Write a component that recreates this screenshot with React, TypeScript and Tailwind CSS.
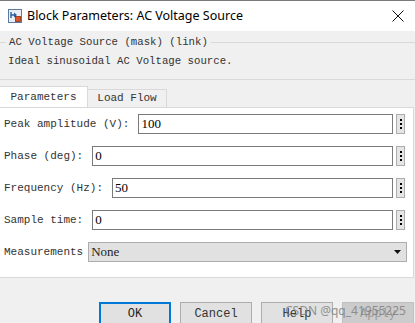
import React from 'react';

const mono = { fontFamily: '"Liberation Mono", "DejaVu Sans Mono", monospace' };
const serif = { fontFamily: '"Liberation Serif", "Times New Roman", serif' };

function BlockIcon() {
  return (
    <svg width="14" height="14" viewBox="0 0 14 14">
      <rect x="0.5" y="0.5" width="13" height="13" fill="#e9eef5" stroke="#5b7aa6" />
      <path d="M3 3 L3 9 M3 6 L8 6" stroke="#2f5d9e" strokeWidth="1.4" fill="none" />
      <path d="M6 3.5 L9 6 L6 8.5 Z" fill="#2f5d9e" />
      <rect x="7.5" y="7.5" width="5" height="5" fill="#d9542b" stroke="#8c2c10" strokeWidth="0.8" />
    </svg>
  );
}

function Dots() {
  return (
    <div className="w-[9px] h-[20px] bg-[#e5e5e5] border border-[#adadad] flex flex-col items-center justify-center gap-[2px]">
      <div className="w-[2px] h-[2px] bg-black" />
      <div className="w-[2px] h-[2px] bg-black" />
      <div className="w-[2px] h-[2px] bg-black" />
    </div>
  );
}

function Field({ label, value }: { label: string; value: string }) {
  return (
    <div className="flex items-center h-[20px]">
      <span className="text-[11px] text-[#333] whitespace-pre pl-[4px] pr-[9px]" style={mono}>{label}</span>
      <div className="flex-1 h-[20px] border border-[#7a7a7a] bg-white flex items-center pl-[2px] text-[13px] text-black" style={serif}>
        {value}
      </div>
      <div className="ml-[3px] mr-[8px]">
        <Dots />
      </div>
    </div>
  );
}

function Button({ label, primary, disabled }: { label: string; primary?: boolean; disabled?: boolean }) {
  return (
    <div
      className={`w-[72px] h-[24px] flex items-center justify-center text-[12px] ${
        primary
          ? 'border-2 border-[#0078d7] bg-[#e1e1e1] text-[#222]'
          : disabled
          ? 'border border-[#bfbfbf] bg-[#cccccc] text-[#9a9a9a]'
          : 'border border-[#adadad] bg-[#e1e1e1] text-[#333]'
      }`}
      style={mono}
    >
      {label}
    </div>
  );
}

export default function App() {
  return (
    <div className="w-[415px] h-[323px] overflow-hidden bg-[#f0f0f0] relative">
      {/* title bar */}
      <div className="h-[31px] bg-white border-t border-[#7a7a7a] flex items-center">
        <div className="ml-[8px] mr-[5px] flex items-center">
          <BlockIcon />
        </div>
        <span className="text-[12.5px] text-black" style={{ fontFamily: '"Noto Sans", "Liberation Sans", sans-serif' }}>
          Block Parameters: AC Voltage Source
        </span>
        <div className="ml-auto mr-[10px] w-[14px] h-[14px] flex items-center justify-center">
          <svg width="12" height="12" viewBox="0 0 12 12">
            <path d="M0.5 0.5 L11.5 11.5 M11.5 0.5 L0.5 11.5" stroke="#111" strokeWidth="1" />
          </svg>
        </div>
      </div>

      {/* mask group */}
      <div className="h-[49px] border-b border-[#d9d9d9] flex flex-col">
        <div className="flex items-center h-[20px] mt-[1px]">
          <div className="w-[6px] h-px bg-[#d9d9d9]" />
          <span className="px-[3px] text-[10.7px] text-[#333]" style={mono}>AC Voltage Source (mask) (link)</span>
          <div className="flex-1 h-px bg-[#d9d9d9]" />
        </div>
        <div className="pl-[8px] mt-[1px] text-[10.7px] text-[#333]" style={mono}>
          Ideal sinusoidal AC Voltage source.
        </div>
      </div>

      {/* tabs */}
      <div className="flex items-end h-[27px] pt-[6px]">
        <div className="w-[88px] h-[21px] bg-white border-t border-r border-[#d9d9d9] flex items-center justify-center text-[11px] text-[#333]" style={mono}>
          Parameters
        </div>
        <div className="w-[79px] h-[18px] bg-[#f0f0f0] border-t border-r border-[#d9d9d9] flex items-center justify-center text-[11px] text-[#333]" style={mono}>
          Load Flow
        </div>
      </div>

      {/* panel */}
      <div className="mr-[1px] h-[171px] bg-white border-t border-r border-b border-[#d9d9d9] pt-[6px] flex flex-col gap-[12px]">
        <Field label="Peak amplitude (V):" value="100" />
        <Field label="Phase (deg):" value="0" />
        <Field label="Frequency (Hz):" value="50" />
        <Field label="Sample time:" value="0" />
        <div className="flex items-center h-[20px]">
          <span className="text-[11px] text-[#333] pl-[4px] pr-[5px]" style={mono}>Measurements</span>
          <div className="flex-1 mr-[6px] h-[20px] bg-[#e1e1e1] border border-[#adadad] flex items-center pl-[2px] text-[13px] text-[#222]" style={serif}>
            None
            <svg className="ml-auto mr-[5px]" width="7" height="4" viewBox="0 0 7 4">
              <path d="M0 0 L7 0 L3.5 4 Z" fill="#111" />
            </svg>
          </div>
        </div>
      </div>

      {/* buttons */}
      <div className="flex gap-[9px] pl-[99px] pt-[24px]">
        <Button label="OK" primary />
        <Button label="Cancel" />
        <Button label="Help" />
        <Button label="Apply" disabled />
      </div>

      <div className="absolute left-[285px] top-[302px] text-[12px] text-[#7d7d7d] opacity-80" style={{ fontFamily: '"Noto Sans", "Liberation Sans", sans-serif' }}>
        CSDN @qq_41955225
      </div>
    </div>
  );
}
